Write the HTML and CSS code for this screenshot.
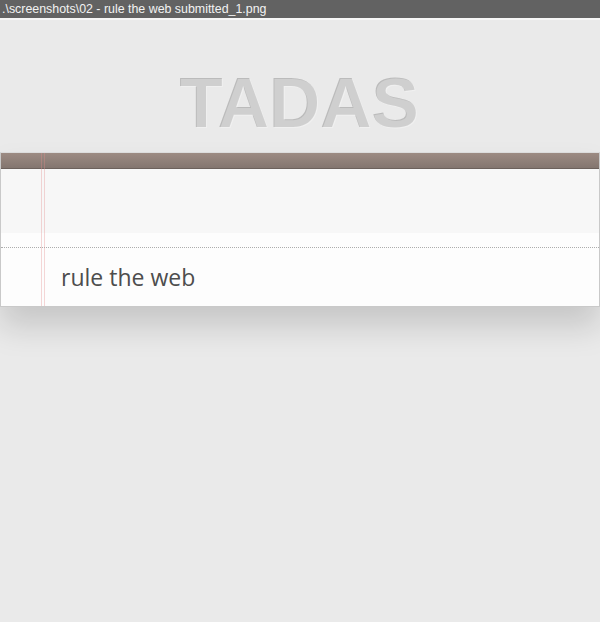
FILE: index.html
```html
<!DOCTYPE html>
<html lang="en">
<head>
<meta charset="utf-8">
<title>TADAS</title>
<link rel="stylesheet" href="styles.css">
</head>
<body>
<div class="titlebar">.\screenshots\02 - rule the web submitted_1.png</div>
<h1 class="title">TADAS</h1>
<section class="app">
  <div class="app-top"></div>
  <div class="new-todo"></div>
  <div class="spacer"></div>
  <ul class="list">
    <li class="item">rule the web</li>
  </ul>
  <div class="margin-lines"></div>
</section>
</body>
</html>
```
FILE: styles.css
```css
html, body {
  margin: 0;
  padding: 0;
}
body {
  background: #eaeaea;
  font-family: "Liberation Sans", Arial, sans-serif;
  width: 600px;
  height: 622px;
  overflow: hidden;
}
.titlebar {
  height: 18px;
  line-height: 18px;
  background: #626262;
  color: #f2f2f2;
  font-size: 12.4px;
  padding-left: 2px;
  border-bottom: 2px solid #f6f6f6;
  white-space: nowrap;
}
.title {
  margin: 49px 0 13px;
  font-family: "Liberation Sans", Arial, sans-serif;
  font-weight: bold;
  font-size: 71px;
  line-height: 70px;
  text-align: center;
  color: rgba(255, 255, 255, 0.3);
  text-shadow: -1px -1px rgba(0, 0, 0, 0.2);
}
.app {
  position: relative;
  background: #fdfdfd;
  border: 1px solid #c9c9c9;
  border-top-color: #dcdcdc;
  box-shadow: 0 20px 30px rgba(0, 0, 0, 0.15);
}
.app-top {
  height: 15px;
  background: linear-gradient(rgba(132, 110, 100, 0.8), rgba(101, 84, 76, 0.8));
  border-bottom: 1px solid #6c615c;
}
.new-todo {
  height: 64px;
  background: #f7f7f7;
}
.spacer {
  height: 14px;
  background: #fdfdfd;
}
.list {
  margin: 0;
  padding: 0;
  list-style: none;
  border-top: 1px dotted #adadad;
}
.item {
  height: 58px;
  line-height: 58px;
  padding-left: 60px;
  font-family: "Open Sans", "Liberation Sans", sans-serif;
  font-size: 23px;
  color: #4d4d4d;
}
.margin-lines {
  position: absolute;
  left: 40px;
  top: 0;
  bottom: 0;
  width: 2px;
  border-left: 1px solid rgba(225, 140, 140, 0.35);
  border-right: 1px solid rgba(225, 140, 140, 0.35);
}
```
